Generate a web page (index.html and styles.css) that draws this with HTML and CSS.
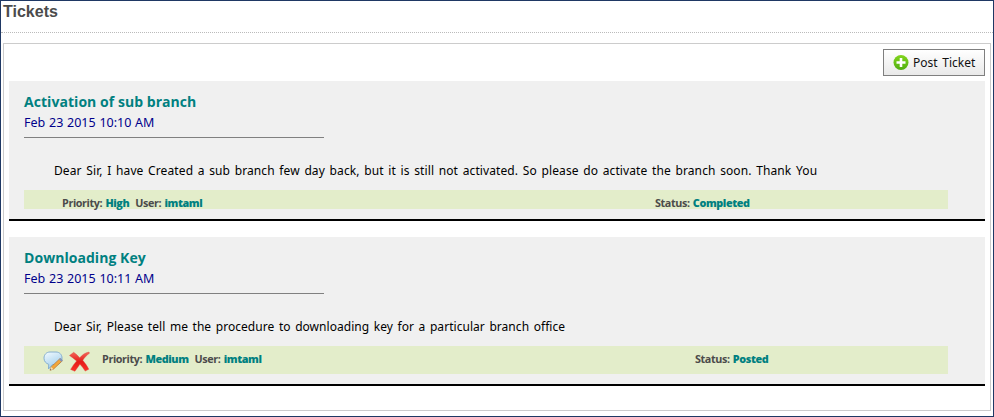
FILE: index.html
```html
<!DOCTYPE html>
<html lang="en">
<head>
<meta charset="utf-8">
<title>Tickets</title>
<link rel="stylesheet" href="styles.css">
</head>
<body>
<main class="page">
  <h1 class="page-title">Tickets</h1>
  <section class="panel">
    <div class="toolbar">
      <button class="post" type="button">
        <svg width="16" height="16" viewBox="0 0 16 16"><defs><linearGradient id="green" x2="0" y2="1"><stop stop-color="#83d51d"/><stop offset="1" stop-color="#4fae10"/></linearGradient></defs><circle cx="8" cy="7.500" r="7.500" fill="url(#green)"/><path d="M8 3v9M3.500 7.500h9" stroke="#fff" stroke-width="2.600"/></svg>
        <span>Post Ticket</span>
      </button>
    </div>
    <article class="ticket">
      <h2 class="subject">Activation of sub branch</h2>
      <div class="date">Feb 23 2015 10:10 AM</div>
      <p class="message message-long">Dear Sir, I have Created a sub branch few day back, but it is still not activated. So please do activate the branch soon. Thank You</p>
      <footer class="meta">
        <div class="actions"></div>
        <div class="details"><span>Priority: <b>High</b></span><span>User: <b>imtaml</b></span></div>
        <div class="status">Status: <b>Completed</b></div>
      </footer>
    </article>
    <article class="ticket">
      <h2 class="subject">Downloading Key</h2>
      <div class="date">Feb 23 2015 10:11 AM</div>
      <p class="message">Dear Sir, Please tell me the procedure to downloading key for a particular branch office</p>
      <footer class="meta meta-tall">
        <div class="actions actions-wide">
          <svg width="21" height="21" viewBox="0 0 21 21"><defs><linearGradient id="bubble" x2=".5" y2="1"><stop stop-color="#f4fbff"/><stop offset="1" stop-color="#9fcdec"/></linearGradient></defs><path d="M7 1h6c3.500 0 6 2.600 6 6s-2.500 6.500-6 6.500H9.500L5.500 18l.2-4.700C3 12.500 1 10.200 1 7.200 1 3.600 3.500 1 7 1z" fill="url(#bubble)" stroke="#86afd0"/><path d="M7 19.300l1.200-3.400 8.800-8.400 2.400 2.300-9 8.400z" fill="#f3a63a" stroke="#a86a2b" stroke-width=".6"/><path d="M16 8.400l1.500-1.500 2.400 2.300-1.600 1.600z" fill="#8095bd"/><path d="M7 19.300l1.200-3.400 2.200 2.300z" fill="#f6dfb6"/><path d="M7 19.300l.5-1.400.9.900z" fill="#444"/></svg>
          <svg width="21" height="21" viewBox="0 0 21 21"><defs><linearGradient id="red" x2="0" y2="1"><stop stop-color="#f4685c"/><stop offset=".5" stop-color="#e51b18"/><stop offset="1" stop-color="#fa3328"/></linearGradient></defs><path d="M.5 4.500l4.200-3.200c2.300 1.600 4.200 3.500 6 5.500 2.500-3 5.500-5 9.200-5.800l.6 1.200c-2.800 2-4.900 4.200-6.700 7.100 2.300 2.800 4.400 5.800 6 8.900l-3.600 1.900c-1.800-2.800-3.500-5-5.300-6.900-1.600 2.300-3.200 4.600-5 7.100l-4.300-1.900c1.800-3.200 3.800-5.900 6-8.400C5.400 8 3.100 6.200.5 4.500z" fill="url(#red)" stroke="#d94a40" stroke-width=".4"/></svg>
        </div>
        <div class="details"><span>Priority: <b>Medium</b></span><span>User: <b>imtaml</b></span></div>
        <div class="status">Status: <b>Posted</b></div>
      </footer>
    </article>
  </section>
</main>
</body>
</html>
```
FILE: styles.css
```css
* { box-sizing: border-box; }
body { margin: 0; background: #fff; }
.page {
  height: 417px;
  padding: 0 2px;
  border: 1px solid #1f3864;
  font-family: "Noto Sans", "Open Sans", sans-serif;
}
.page-title {
  margin: 0 -2px 10px;
  padding: 0 2px;
  height: 32px;
  border-bottom: 1px dotted #bbb;
  font: bold 16px/21px "Liberation Sans", Arial, sans-serif;
  color: #4b4b4b;
}
.panel {
  width: 988px;
  height: 368px;
  padding: 5px;
  border: 1px solid #ccc;
}
.toolbar { display: flex; justify-content: flex-end; height: 32px; }
.post {
  display: flex;
  align-items: center;
  gap: 4px;
  width: 102px;
  height: 27px;
  padding: 0 0 0 9px;
  border: 1px solid #7f7f7f;
  background: linear-gradient(#fff, #e9e9e9);
  font: 12px/20px "Noto Sans", sans-serif;
  word-spacing: 1.5px;
  color: #111;
  white-space: nowrap;
}
.ticket {
  width: 976px;
  margin-bottom: 16px;
  padding: 10px 37px 10px 15px;
  border-bottom: 2px solid #000;
  background: #f0f0f0;
}
.subject {
  margin: 0;
  font: bold 14px/21px "Open Sans", sans-serif;
  letter-spacing: .05px;
  color: #008080;
}
.date {
  width: 300px;
  height: 26px;
  border-bottom: 1px solid #808080;
  font-size: 12.500px;
  line-height: 21px;
  word-spacing: .5px;
  color: #00008b;
}
.message {
  height: 52px;
  margin: 0;
  padding: 22px 0 0 30px;
  font-size: 12px;
  line-height: 21px;
  letter-spacing: .045px;
  word-spacing: 1.4px;
  color: #000;
  white-space: nowrap;
}
.message-long { letter-spacing: .105px; }
.meta {
  display: flex;
  height: 19px;
  background: #e3edca;
  font: bold 10.800px/15px "Open Sans", sans-serif;
  letter-spacing: -.4px;
  word-spacing: .8px;
  color: #4b4b4b;
  white-space: nowrap;
}
.meta-tall { height: 28px; }
.meta b { color: #008080; }
.actions { width: 38px; }
.actions-wide { display: flex; gap: 5px; width: 78px; padding: 5px 0 0 19px; }
.details { display: flex; gap: 6px; width: 593px; padding-top: 5px; }
.status { padding-top: 5px; }
```
